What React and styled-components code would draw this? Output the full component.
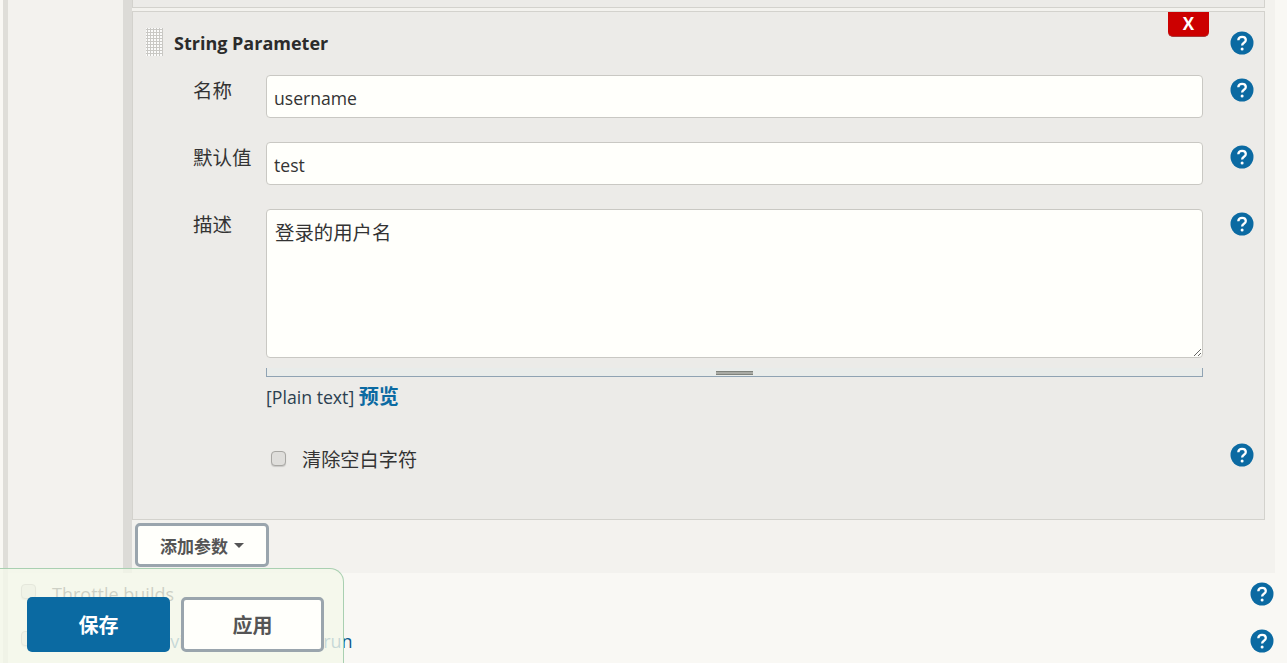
import React from "react";
import styled, { createGlobalStyle } from "styled-components";

const GlobalStyle = createGlobalStyle`
  html, body {
    margin: 0;
    padding: 0;
    height: 100%;
    overflow: hidden;
    background: #f9f8f4;
  }
  body {
    font-family: "Open Sans", "Noto Sans CJK SC", sans-serif;
    font-size: 18px;
    color: #333;
  }
`;

const Page = styled.div`
  position: relative;
  height: 663px;
  overflow: hidden;
  padding-left: 3px;
  background: #f9f8f4;
`;

const Content = styled.div`
  height: 663px;
  border-left: 5px solid #dfded9;
`;

const Upper = styled.div`
  display: flex;
  height: 573px;
  margin-right: 12px;
  background: #f3f2ee;
`;

const Rail = styled.div`
  flex: none;
  width: 115px;
  border-right: 9px solid #dcdbd7;
`;

const Stack = styled.div`
  flex: none;
  width: 1133px;
`;

const PrevPanel = styled.div`
  height: 7px;
  margin-bottom: 3px;
  background: #ecebe8;
  border: 1px solid #d3d2cd;
  border-top: 0;
`;

const Panel = styled.section`
  position: relative;
  box-sizing: border-box;
  height: 509px;
  background: #ecebe8;
  border: 1px solid #d3d2cd;
`;

const Head = styled.div`
  box-sizing: border-box;
  display: flex;
  align-items: center;
  gap: 11px;
  height: 63px;
  padding: 0 0 3px 13px;
`;

const Grip = styled.div`
  width: 17px;
  height: 28px;
  background-color: #fbfbfa;
  background-image: radial-gradient(circle at 1.5px 1.5px, #c9c8c4 1px, transparent 1.2px);
  background-size: 3px 3px;
`;

const Title = styled.h3`
  margin: 2px 0 0;
  font-size: 18px;
  font-weight: 700;
  color: #2b2b2b;
`;

const HeadHelp = styled.div`
  margin-left: auto;
  margin-right: 10px;
  margin-top: 2px;
  display: flex;
`;

const RemoveButton = styled.button`
  position: absolute;
  top: 0;
  right: 55px;
  width: 41px;
  height: 25px;
  padding: 0;
  border: 0;
  border-bottom: 1px solid #a83a3a;
  border-radius: 0 0 5px 5px;
  background: #cc0000;
  color: #fff;
  font-family: "Open Sans", sans-serif;
  font-size: 17px;
  font-weight: 700;
  line-height: 24px;
`;

const Row = styled.div`
  display: grid;
  grid-template-columns: 73px 937px 1fr;
  padding-left: 60px;
  margin-bottom: ${(p) => p.$gap || 0}px;
`;

const Label = styled.label`
  padding-top: 1px;
  font-size: 19.5px;
  line-height: 30px;
  color: #333;
`;

const HelpCell = styled.div`
  padding-left: 27px;
  padding-top: ${(p) => p.$top ?? 3}px;
`;

const TextInput = styled.input`
  box-sizing: border-box;
  display: block;
  width: 100%;
  height: 43px;
  padding: 2px 7px 0;
  border: 1px solid #c9c8c3;
  border-radius: 4px;
  background: #fffffb;
  color: #333;
  font: 17.6px "Open Sans", "Noto Sans CJK SC", sans-serif;
`;

const TextArea = styled.textarea`
  box-sizing: border-box;
  display: block;
  width: 100%;
  height: 149px;
  padding: 7px 8px;
  border: 1px solid #c9c8c3;
  border-radius: 4px;
  background: #fffffb;
  color: #333;
  font: 19.4px "Noto Sans CJK SC", sans-serif;
`;

const Grabber = styled.div`
  display: flex;
  justify-content: center;
  box-sizing: border-box;
  height: 9px;
  margin-top: 10px;
  padding-top: 3px;
  background: #e9ecea;
  border: 1px solid #90a3b3;
  border-top: 0;
`;

const GrabHandle = styled.div`
  width: 37px;
  height: 4px;
  background: #a9aaa4;
  border-top: 1px solid #7f827c;
  border-bottom: 1px solid #7f827c;
  box-sizing: border-box;
`;

const PreviewLine = styled.div`
  margin-top: 7px;
  font-size: 17.7px;
  line-height: 24px;
  color: #2b3f50;
`;

const PreviewLink = styled.a`
  font-family: "Noto Sans CJK SC", sans-serif;
  font-weight: 700;
  font-size: 20px;
  color: #0b6aa2;
`;

const CheckLine = styled.div`
  display: flex;
  align-items: center;
  gap: 16px;
  height: 32px;
  padding-left: 5px;
  font-size: 19.2px;
`;

const Check = styled.span`
  box-sizing: border-box;
  flex: none;
  width: 15px;
  height: 15px;
  margin-top: ${(p) => p.$lift || 0}px;
  border: 1px solid #a8a7a3;
  border-radius: 4px;
  background: #dfdedb;
  box-shadow: 0 1px 1px rgba(0, 0, 0, 0.15);
`;

const AddButton = styled.button`
  display: flex;
  align-items: center;
  justify-content: center;
  gap: 6px;
  box-sizing: border-box;
  width: 134px;
  height: 44px;
  margin: 3px 0 0 3px;
  padding: 0;
  background: #fffffb;
  border: 3px solid #9aa5ad;
  border-radius: 5px;
  color: #555;
  font: 700 17px "Noto Sans CJK SC", sans-serif;
`;

const Caret = styled.span`
  width: 0;
  height: 0;
  border-left: 5.5px solid transparent;
  border-right: 5.5px solid transparent;
  border-top: 5px solid #555;
`;

const Lower = styled.div`
  display: flex;
  flex-direction: column;
  gap: 6px;
`;

const OptionRow = styled.div`
  display: flex;
  align-items: center;
  height: 41px;
  padding: 0 13px 0 13px;
  font-size: 18px;
  color: ${(p) => p.$color || "#333"};
`;

const OptionCheck = styled(Check)`
  margin-right: 16px;
`;

const OptionText = styled.span`
  flex: 1;
`;

const SaveBar = styled.div`
  position: absolute;
  left: 0;
  top: 568px;
  box-sizing: border-box;
  display: flex;
  gap: 11px;
  width: 344px;
  height: 95px;
  padding: 28px 0 0 27px;
  background: rgba(244, 247, 234, 0.8);
  border: 1px solid #a9d0b1;
  border-left: 0;
  border-bottom: 0;
  border-radius: 0 14px 0 0;
`;

const BarButton = styled.button`
  box-sizing: border-box;
  width: 143px;
  height: 55px;
  padding: 0;
  border: ${(p) => (p.$primary ? "0" : "3px solid #9aa5ad")};
  border-radius: 5px;
  background: ${(p) => (p.$primary ? "#0b6aa2" : "#fffffb")};
  color: ${(p) => (p.$primary ? "#fff" : "#555")};
  font: 700 20px "Noto Sans CJK SC", sans-serif;
`;

const HelpIcon = () => (
  <svg width="24" height="24" viewBox="0 0 24 24">
    <circle cx="12" cy="12" r="11.5" fill="#0b6aa2" />
    <path
      d="M8.3 9.3c.1-2.2 1.7-3.5 3.8-3.5s3.7 1.2 3.7 3.2c0 2.9-3.7 2.7-3.7 5.6"
      fill="none"
      stroke="#fff"
      strokeWidth="2.3"
    />
    <circle cx="12.1" cy="18" r="1.5" fill="#fff" />
  </svg>
);

export default function App() {
  return (
    <Page>
      <GlobalStyle />
      <Content>
        <Upper>
          <Rail />
          <Stack>
            <PrevPanel />
            <Panel>
              <RemoveButton>X</RemoveButton>
              <Head>
                <Grip />
                <Title>String Parameter</Title>
                <HeadHelp>
                  <HelpIcon />
                </HeadHelp>
              </Head>
              <Row $gap={24}>
                <Label>名称</Label>
                <TextInput defaultValue="username" />
                <HelpCell>
                  <HelpIcon />
                </HelpCell>
              </Row>
              <Row $gap={24}>
                <Label>默认值</Label>
                <TextInput defaultValue="test" />
                <HelpCell>
                  <HelpIcon />
                </HelpCell>
              </Row>
              <Row $gap={34}>
                <Label>描述</Label>
                <div>
                  <TextArea defaultValue="登录的用户名" />
                  <Grabber>
                    <GrabHandle />
                  </Grabber>
                  <PreviewLine>
                    [Plain text] <PreviewLink>预览</PreviewLink>
                  </PreviewLine>
                </div>
                <HelpCell>
                  <HelpIcon />
                </HelpCell>
              </Row>
              <Row>
                <span />
                <CheckLine>
                  <Check $lift={-2} />
                  清除空白字符
                </CheckLine>
                <HelpCell $top={0}>
                  <HelpIcon />
                </HelpCell>
              </Row>
            </Panel>
            <AddButton>
              添加参数
              <Caret />
            </AddButton>
          </Stack>
        </Upper>
        <Lower>
          <OptionRow>
            <OptionCheck $lift={-4} />
            <OptionText>Throttle builds</OptionText>
            <HelpIcon />
          </OptionRow>
          <OptionRow $color="#0f5a8c">
            <OptionCheck $lift={-4} />
            <OptionText>Prepare an environment for the run</OptionText>
            <HelpIcon />
          </OptionRow>
        </Lower>
      </Content>
      <SaveBar>
        <BarButton $primary>保存</BarButton>
        <BarButton>应用</BarButton>
      </SaveBar>
    </Page>
  );
}
